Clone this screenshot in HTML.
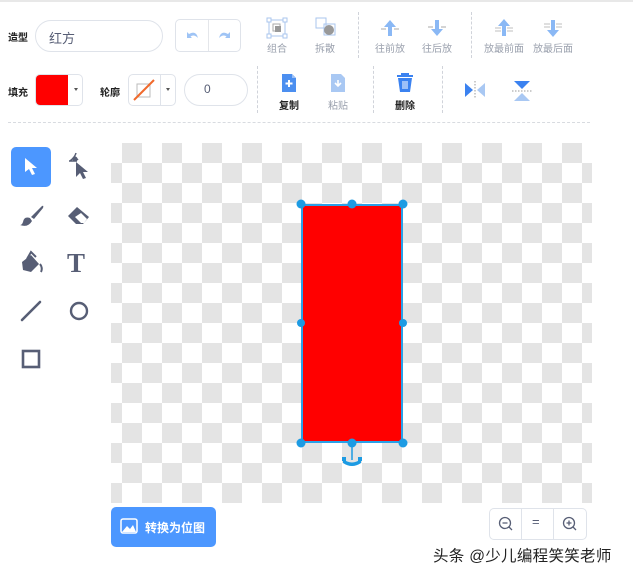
<!DOCTYPE html>
<html><head><meta charset="utf-8"><style>
*{margin:0;padding:0;box-sizing:border-box}
body{width:633px;height:577px;background:#fff;position:relative;overflow:hidden;font-family:"Liberation Sans","Noto Sans CJK SC",sans-serif;color:#575e75}
.a{position:absolute}
.lbl{font-size:10px;color:#222;font-weight:bold}
.sm{font-size:10px;color:#9aa0ad;text-align:center;width:60px;margin-left:-30px}
.dv{border-left:1px dashed #d0d3da}
.box{border:1px solid #dfe3ea;border-radius:6px}
</style></head><body>
<div class="a" style="left:0;top:0;width:633px;height:2px;background:#e8e8e8"></div>
<div class="a lbl" style="left:8px;top:29px">造型</div>
<div class="a box" style="left:35px;top:20px;width:128px;height:32px;border-radius:16px"></div>
<div class="a" style="left:49px;top:28px;font-size:13px;color:#575e75">红方</div>
<div class="a box" style="left:175px;top:19px;width:66px;height:33px;border-radius:5px"></div>
<div class="a" style="left:208px;top:20px;width:1px;height:31px;background:#e4e6ea"></div>
<svg class="a" style="left:185px;top:30px" width="16" height="10"><path d="M2 2 L2 8 L7 8 L5.5 6.5 Q9 4 13 8 Q11 0 4 4 Z" fill="#9fc4f5"/></svg>
<svg class="a" style="left:216px;top:30px" width="16" height="10"><path d="M14 2 L14 8 L9 8 L10.5 6.5 Q7 4 3 8 Q5 0 12 4 Z" fill="#9fc4f5"/></svg>
<svg class="a" style="left:266px;top:17px" width="22" height="22"><rect x="3" y="3" width="16" height="16" fill="none" stroke="#aac6ee" stroke-width="1"/><rect x="1" y="1" width="4" height="4" fill="#fff" stroke="#aac6ee"/><rect x="17" y="1" width="4" height="4" fill="#fff" stroke="#aac6ee"/><rect x="1" y="17" width="4" height="4" fill="#fff" stroke="#aac6ee"/><rect x="17" y="17" width="4" height="4" fill="#fff" stroke="#aac6ee"/><rect x="7" y="7" width="7" height="7" fill="none" stroke="#aaa"/><rect x="9" y="9" width="6" height="6" fill="#999"/></svg>
<div class="a sm" style="left:277px;top:40px">组合</div>
<svg class="a" style="left:314px;top:16px" width="24" height="24"><rect x="2" y="2" width="10" height="10" fill="none" stroke="#aac6ee"/><rect x="10" y="8" width="11" height="11" fill="none" stroke="#aac6ee"/><circle cx="15" cy="14" r="5" fill="#999"/></svg>
<div class="a sm" style="left:325px;top:40px">拆散</div>
<div class="a dv" style="left:358px;top:12px;height:46px"></div>
<svg class="a" style="left:380px;top:18px" width="20" height="20"><path d="M10 2 L16 9 L12 9 L12 18 L8 18 L8 9 L4 9Z" fill="#8ab8f5"/><path d="M1 11h5M14 11h5" stroke="#aaa"/></svg>
<div class="a sm" style="left:390px;top:40px">往前放</div>
<svg class="a" style="left:427px;top:18px" width="20" height="20"><path d="M10 18 L16 11 L12 11 L12 2 L8 2 L8 11 L4 11Z" fill="#8ab8f5"/><path d="M1 9h5M14 9h5" stroke="#aaa"/></svg>
<div class="a sm" style="left:437px;top:40px">往后放</div>
<div class="a dv" style="left:471px;top:12px;height:46px"></div>
<svg class="a" style="left:494px;top:18px" width="20" height="20"><path d="M10 1 L16 8 L12 8 L12 18 L8 18 L8 8 L4 8Z" fill="#8ab8f5"/><path d="M1 10h6M13 10h6M1 13h6M13 13h6" stroke="#aaa" stroke-width=".8"/></svg>
<div class="a sm" style="left:504px;top:40px">放最前面</div>
<svg class="a" style="left:543px;top:18px" width="20" height="20"><path d="M10 19 L16 12 L12 12 L12 2 L8 2 L8 12 L4 12Z" fill="#8ab8f5"/><path d="M1 6h6M13 6h6M1 9h6M13 9h6" stroke="#aaa" stroke-width=".8"/></svg>
<div class="a sm" style="left:553px;top:40px">放最后面</div>
<div class="a lbl" style="left:8px;top:84px">填充</div>
<div class="a box" style="left:35px;top:74px;width:48px;height:32px;border-radius:5px;overflow:hidden"><div style="width:32px;height:100%;background:#ff0000"></div></div>
<div class="a" style="left:74px;top:88px;width:0;height:0;border:2px solid transparent;border-top:3px solid #555"></div>
<div class="a lbl" style="left:100px;top:84px">轮廓</div>
<div class="a box" style="left:128px;top:74px;width:48px;height:32px;border-radius:5px"></div>
<div class="a" style="left:160px;top:75px;width:1px;height:30px;background:#dfe3ea"></div>
<svg class="a" style="left:132px;top:78px" width="25" height="24"><rect x="5" y="6" width="13" height="13" fill="none" stroke="#bbb"/><path d="M2 22 L22 2" stroke="#f06a2c" stroke-width="2"/></svg>
<div class="a" style="left:166px;top:88px;width:0;height:0;border:2px solid transparent;border-top:3px solid #555"></div>
<div class="a box" style="left:184px;top:74px;width:64px;height:32px;border-radius:16px"></div>
<div class="a" style="left:204px;top:82px;font-size:12px;color:#575e75">0</div>
<div class="a dv" style="left:257px;top:66px;height:47px"></div>
<svg class="a" style="left:281px;top:73px" width="16" height="20"><path d="M1 1 H11 L15 5 V19 H1Z" fill="#4c8ff0"/><path d="M11 1 V5 H15" fill="#9cc0f5"/><path d="M8 7v7M4.5 10.5h7" stroke="#fff" stroke-width="2"/></svg>
<div class="a lbl" style="left:279px;top:97px;font-size:10px">复制</div>
<svg class="a" style="left:330px;top:73px" width="16" height="20"><path d="M1 1 H11 L15 5 V19 H1Z" fill="#a9c8f3"/><path d="M8 7v6M5 10l3 3 3-3" stroke="#fff" stroke-width="1.6" fill="none"/></svg>
<div class="a sm" style="left:338px;top:97px">粘贴</div>
<div class="a dv" style="left:373px;top:66px;height:47px"></div>
<svg class="a" style="left:396px;top:73px" width="18" height="20"><path d="M1 3h16M6 3V1h6v2" stroke="#3b82f0" stroke-width="2" fill="none"/><path d="M2 5h14l-2 14H4Z" fill="#3b82f0"/><path d="M7 8v8M9 8v8M11 8v8" stroke="#fff"/></svg>
<div class="a lbl" style="left:395px;top:97px">删除</div>
<div class="a dv" style="left:442px;top:66px;height:47px"></div>
<svg class="a" style="left:464px;top:81px" width="22" height="18"><path d="M1 2 L9 9 L1 16Z" fill="#3b82f0"/><path d="M21 2 L13 9 L21 16Z" fill="#a9c8f3"/><path d="M11 0v18" stroke="#999" stroke-dasharray="1.5 1.5"/></svg>
<svg class="a" style="left:512px;top:80px" width="20" height="22"><path d="M2 1 L18 1 L10 9Z" fill="#3b82f0"/><path d="M2 21 L18 21 L10 13Z" fill="#a9c8f3"/><path d="M0 11h20" stroke="#999" stroke-dasharray="1.5 1.5"/></svg>
<div class="a" style="left:8px;top:122px;width:582px;border-top:1px dashed #d8dbe0"></div>
<div class="a" style="left:11px;top:147px;width:40px;height:40px;background:#4c97ff;border-radius:5px"></div>
<svg class="a" style="left:23px;top:157px" width="18" height="20"><path d="M2 1 L2 15 L6 12 L9 18 L12 17 L9 11 L14 11Z" fill="#fff"/></svg>
<svg class="a" style="left:67px;top:152px" width="24" height="28"><path d="M3 9 Q8 5 9 1 M7 4 l4 4 M2 9h8" stroke="#575e75" stroke-width="1.5" fill="none"/><circle cx="8" cy="7" r="2.5" fill="#575e75"/><path d="M9 10 L9 25 L13 21 L16 27 L19 26 L16 20 L21 20Z" fill="#575e75"/></svg>
<svg class="a" style="left:19px;top:203px" width="26" height="24"><path d="M12 14 L23 3 Q25 2 24 5 L15 16Z" fill="#575e75"/><path d="M11 15 Q5 13 4 19 Q3 22 1 22 Q9 25 13 18Z" fill="#575e75"/></svg>
<svg class="a" style="left:66px;top:205px" width="26" height="22"><path d="M2 11 L11 2 L23 12 L17 19 H10Z" fill="#575e75"/><path d="M9 12 L15 18 L18 18 L21 14 L15 8Z" fill="#fff"/></svg>
<svg class="a" style="left:19px;top:250px" width="26" height="26"><path d="M3 12 L12 5 L20 14 L12 22 L4 20Z" fill="#575e75"/><path d="M8 9 L12 2 L17 7" stroke="#575e75" stroke-width="2" fill="none"/><path d="M21 14 Q24 18 22 22" stroke="#575e75" stroke-width="2" fill="none"/></svg>
<div class="a" style="left:67px;top:249px;font-size:27px;font-weight:bold;color:#575e75;font-family:'Liberation Serif',serif;line-height:28px">T</div>
<svg class="a" style="left:20px;top:300px" width="22" height="22"><path d="M2 20 L20 2" stroke="#575e75" stroke-width="2.6" stroke-linecap="round"/></svg>
<svg class="a" style="left:68px;top:301px" width="22" height="20"><circle cx="11" cy="10" r="8" fill="none" stroke="#575e75" stroke-width="2.4"/></svg>
<svg class="a" style="left:21px;top:349px" width="20" height="20"><rect x="2" y="2" width="16" height="16" fill="none" stroke="#575e75" stroke-width="2.6"/></svg>
<div class="a" style="left:111px;top:143px;width:481px;height:360px;background:repeating-conic-gradient(#fff 0 25%,#e4e4e4 0 50%) 11px 0/40px 40px"></div>
<div class="a" style="left:301px;top:204px;width:102px;height:239px;background:#ff0000;border:2px solid #29a0e8;border-radius:2px"></div>
<svg class="a" style="left:290px;top:195px" width="124" height="275">
<g fill="#1d9be3"><circle cx="11" cy="9" r="4.5"/><circle cx="62" cy="9" r="4.5"/><circle cx="113" cy="9" r="4.5"/><circle cx="11" cy="128" r="4"/><circle cx="113" cy="128" r="4"/><circle cx="11" cy="248" r="4.5"/><circle cx="62" cy="248" r="4.5"/><circle cx="113" cy="248" r="4.5"/></g>
<path d="M62 248v17" stroke="#1d9be3" stroke-width="1.5"/><path d="M53 264 Q62 271 71 264 L71 268 Q62 274 53 268Z" fill="#1d9be3"/><rect x="52" y="262" width="4" height="4" fill="#1d9be3"/><rect x="68" y="262" width="4" height="4" fill="#1d9be3"/>
</svg>
<div class="a" style="left:111px;top:507px;width:105px;height:40px;background:#4c97ff;border-radius:5px"></div>
<svg class="a" style="left:120px;top:518px" width="18" height="16"><rect x="1" y="1" width="16" height="14" rx="2" fill="none" stroke="#fff" stroke-width="1.5"/><path d="M2 14 L7 8 L10 11 L13 7 L16 14Z" fill="#fff"/></svg>
<div class="a" style="left:145px;top:519px;font-size:12px;font-weight:bold;color:#fff">转换为位图</div>
<div class="a box" style="left:489px;top:508px;width:98px;height:32px;border-radius:5px"></div>
<div class="a" style="left:521px;top:509px;width:1px;height:30px;background:#dfe3ea"></div>
<div class="a" style="left:553px;top:509px;width:1px;height:30px;background:#dfe3ea"></div>
<svg class="a" style="left:498px;top:516px" width="16" height="16"><circle cx="7" cy="7" r="5.5" fill="none" stroke="#575e75" stroke-width="1.3"/><path d="M11 11l3 3M4.5 7h5" stroke="#575e75" stroke-width="1.3"/></svg>
<div class="a" style="left:532px;top:514px;font-size:13px;color:#575e75">=</div>
<svg class="a" style="left:562px;top:516px" width="16" height="16"><circle cx="7" cy="7" r="5.5" fill="none" stroke="#575e75" stroke-width="1.3"/><path d="M11 11l3 3M4.5 7h5M7 4.5v5" stroke="#575e75" stroke-width="1.3"/></svg>
<div class="a" style="left:433px;top:544px;font-size:15.5px;color:#222;white-space:nowrap;letter-spacing:.3px">头条 @少儿编程笑笑老师</div>
</body></html>
